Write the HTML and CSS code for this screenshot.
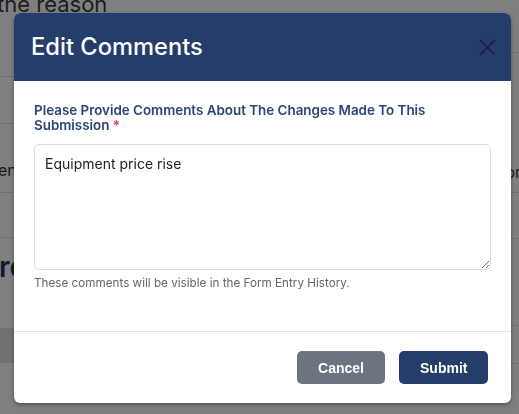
FILE: index.html
```html
<!DOCTYPE html>
<html lang="en">
<head>
<meta charset="utf-8">
<title>Edit Comments</title>
<link rel="stylesheet" href="styles.css">
</head>
<body>
<div class="page">
  <div class="col col-left">
    <div class="row row-top"><span class="top-text">the reason</span></div>
    <div class="row row-b"></div>
    <div class="row row-c"><span class="cell-text">ens</span></div>
    <div class="row row-d"></div>
    <div class="row row-e"><span class="heading-text">re</span></div>
    <div class="row row-band"></div>
  </div>
  <div class="col col-right">
    <div class="row r-a"></div>
    <div class="row r-b"><span class="cell-text-r">or</span></div>
    <div class="row r-c"></div>
    <div class="row r-d"></div>
    <div class="row r-e"></div>
  </div>
</div>

<div class="backdrop">
  <div class="modal">
    <div class="modal-header">
      <h2 class="modal-title">Edit Comments</h2>
      <button class="close-btn" aria-label="Close">
        <svg width="17" height="17" viewBox="0 0 17 17"><path d="M1 1 L16 16 M16 1 L1 16" stroke="#16223b" stroke-width="1.7" fill="none"/></svg>
      </button>
    </div>
    <div class="modal-body">
      <label class="field-label">Please Provide Comments About The Changes Made To This Submission <span class="req">*</span></label>
      <textarea class="comments">Equipment price rise</textarea>
      <p class="help">These comments will be visible in the Form Entry History.</p>
    </div>
    <div class="modal-footer">
      <button class="btn btn-cancel">Cancel</button>
      <button class="btn btn-submit">Submit</button>
    </div>
  </div>
</div>
</body>
</html>
```

FILE: styles.css
```css
html, body {
  margin: 0;
  padding: 0;
}
body {
  background: #fff;
  font-family: "Inter", "Noto Sans", sans-serif;
  width: 519px;
  height: 414px;
  overflow: hidden;
}

/* background page */
.page {
  display: flex;
  height: 414px;
}
.col {
  display: flex;
  flex-direction: column;
}
.col-left { width: 260px; }
.col-right { flex: 1; }
.row { border-bottom: 1px solid #dedede; }
.row-top { height: 76px; overflow: hidden; }
.top-text {
  display: block;
  margin-top: -9px;
  margin-left: -3px;
  font-size: 22px;
  color: #3a3a3a;
}
.row-b { height: 46px; }
.row-c { height: 68px; display: flex; align-items: center; overflow: hidden; }
.cell-text { margin-left: -2px; font-size: 16px; color: #333; margin-top: 24px; }
.row-d { height: 44px; }
.row-e { height: 90px; border-bottom: none; overflow: hidden; display: flex; align-items: center; }
.heading-text { margin-left: -1px; font-size: 28px; font-weight: 600; color: #1f3560; margin-top: -32px; }
.row-band { height: 35px; background: #e3e3e3; border-bottom: none; }

.r-a { height: 52px; }
.r-b { height: 139px; display: flex; align-items: flex-end; justify-content: flex-end; overflow: hidden; }
.cell-text-r { font-size: 16px; color: #333; margin-right: -2px; margin-bottom: 10px; }
.r-c { height: 45px; }
.r-d { height: 86px; }
.r-e { height: 37px; }

/* overlay */
.backdrop {
  position: fixed;
  inset: 0;
  background: rgba(0, 0, 0, 0.5);
}
.modal {
  margin: 13px 0 0 14px;
  width: 497px;
  height: 390px;
  background: #fff;
  border-radius: 6px;
  overflow: hidden;
  box-shadow: 0 2px 4px rgba(0, 0, 0, 0.35);
  display: flex;
  flex-direction: column;
}
.modal-header {
  height: 68px;
  background: #243d6b;
  display: flex;
  align-items: center;
  justify-content: space-between;
  padding: 0 15px 0 17px;
  flex-shrink: 0;
}
.modal-title {
  margin: 0;
  font-size: 23.7px;
  font-weight: 500;
  color: #fff;
  line-height: 30px;
}
.close-btn {
  border: 0;
  background: transparent;
  padding: 0;
  width: 17px;
  height: 17px;
  display: flex;
}
.modal-body {
  padding: 22px 20px 0 20px;
  flex: 1;
}
.field-label {
  display: block;
  max-width: 425px;
  font-size: 13.4px;
  line-height: 15px;
  font-weight: 600;
  color: #2b4675;
  margin-bottom: 11px;
}
.req { color: #dc3545; }
.comments {
  display: block;
  box-sizing: border-box;
  width: 457px;
  height: 126px;
  margin: 0;
  border: 1px solid #dcdcdc;
  border-radius: 5px;
  padding: 9px 10px;
  font-family: "Inter", "Noto Sans", sans-serif;
  font-size: 14px;
  line-height: 20px;
  color: #222;
  resize: vertical;
}
.help {
  margin: 6px 0 0 0;
  font-size: 11.7px;
  line-height: 14px;
  color: #666;
}
.modal-footer {
  border-top: 1px solid #e3e3e3;
  padding: 19px 23px 19px 0;
  display: flex;
  justify-content: flex-end;
  gap: 14px;
  flex-shrink: 0;
}
.btn {
  height: 33px;
  border: 0;
  border-radius: 5px;
  font-family: "Liberation Sans", Arial, sans-serif;
  font-weight: 700;
  font-size: 14px;
  color: #fff;
  padding: 0 21px;
}
.btn-cancel { background: #6c757d; width: 88px; }
.btn-submit { background: #243d6b; width: 89px; }
```
